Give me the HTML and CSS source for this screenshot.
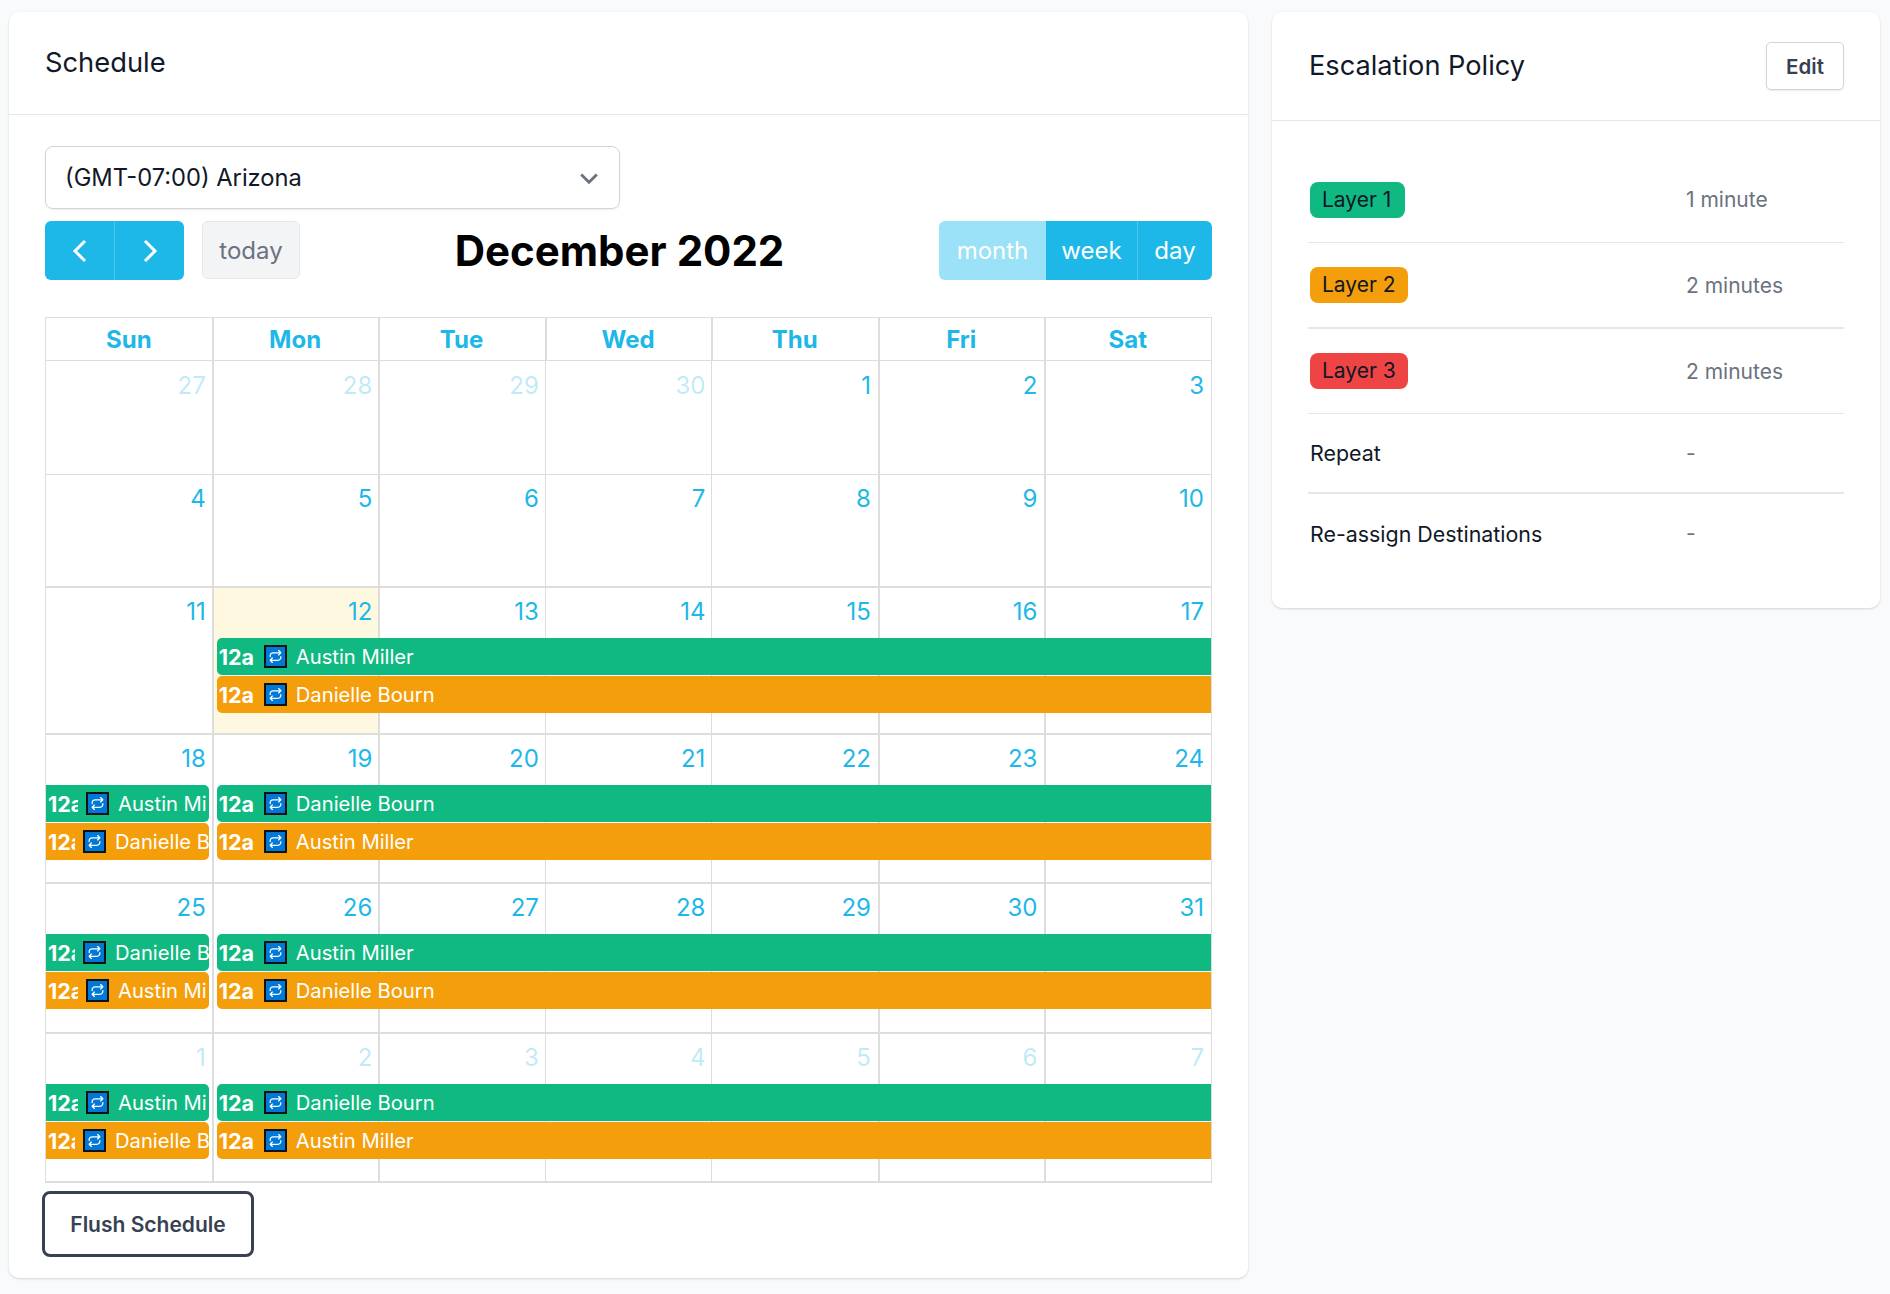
FILE: index.html
```html
<!DOCTYPE html>
<html lang="en">
<head>
<meta charset="utf-8">
<title>Schedule</title>
<link rel="stylesheet" href="styles.css">
</head>
<body>
<svg class="defs" width="0" height="0" aria-hidden="true"><symbol id="rp" viewBox="0 0 24 24"><path d="M17 2.500l3.500 3.500L17 9.500M3.500 12v-1.500A4.500 4.500 0 0 1 8 6h12M7 21.500L3.500 18 7 14.500M20.500 12v1.500A4.500 4.500 0 0 1 16 18H4" fill="none" stroke="#fff" stroke-width="2" stroke-linecap="round" stroke-linejoin="round"/></symbol></svg>
<main class="page">
  <section class="card schedule">
    <header class="schedule-head"><h2 class="title">Schedule</h2></header>
    <div class="schedule-body">
      <div class="select"><span>(GMT-07:00) Arizona</span><svg class="select-chev" viewBox="0 0 20 20"><path d="M3.500 7l6.500 6.500L16.500 7" fill="none" stroke="#6b7280" stroke-width="2.400"/></svg></div>
      <div class="toolbar">
        <div class="toolbar-left">
          <div class="btn-group">
            <button class="btn nav"><svg viewBox="0 0 20 28"><path d="M15 4L5 14l10 10" fill="none" stroke="#fff" stroke-width="3"/></svg></button>
            <button class="btn nav"><svg viewBox="0 0 20 28"><path d="M5 4l10 10L5 24" fill="none" stroke="#fff" stroke-width="3"/></svg></button>
          </div>
          <button class="today">today</button>
        </div>
        <h1 class="month-title">December 2022</h1>
        <div class="btn-group">
          <button class="btn view view-month active">month</button>
          <button class="btn view view-week">week</button>
          <button class="btn view view-day">day</button>
        </div>
      </div>
      <div class="cal">
        <div class="dow"><div>Sun</div><div>Mon</div><div>Tue</div><div>Wed</div><div>Thu</div><div>Fri</div><div>Sat</div></div>

        <div class="week w1">
          <div class="day off">27</div><div class="day off">28</div><div class="day off">29</div><div class="day off">30</div><div class="day">1</div><div class="day">2</div><div class="day">3</div>
        </div>
        <div class="week w2">
          <div class="day">4</div><div class="day">5</div><div class="day">6</div><div class="day">7</div><div class="day">8</div><div class="day">9</div><div class="day">10</div>
        </div>
        <div class="week w3">
          <div class="day">11</div><div class="day now">12</div><div class="day">13</div><div class="day">14</div><div class="day">15</div><div class="day">16</div><div class="day">17</div>
          <div class="ev green rest r1"><span class="t">12a</span><svg class="ic"><use href="#rp"/></svg><span class="n">Austin Miller</span></div>
          <div class="ev amber rest r2"><span class="t">12a</span><svg class="ic"><use href="#rp"/></svg><span class="n">Danielle Bourn</span></div>
        </div>
        <div class="week w4">
          <div class="day">18</div><div class="day">19</div><div class="day">20</div><div class="day">21</div><div class="day">22</div><div class="day">23</div><div class="day">24</div>
          <div class="ev green sun r1"><span class="t ta">12a</span><svg class="ic"><use href="#rp"/></svg><span class="n">Austin Miller</span></div>
          <div class="ev amber sun r2"><span class="t td">12a</span><svg class="ic"><use href="#rp"/></svg><span class="n">Danielle Bourn</span></div>
          <div class="ev green rest r1"><span class="t">12a</span><svg class="ic"><use href="#rp"/></svg><span class="n">Danielle Bourn</span></div>
          <div class="ev amber rest r2"><span class="t">12a</span><svg class="ic"><use href="#rp"/></svg><span class="n">Austin Miller</span></div>
        </div>
        <div class="week w5">
          <div class="day">25</div><div class="day">26</div><div class="day">27</div><div class="day">28</div><div class="day">29</div><div class="day">30</div><div class="day">31</div>
          <div class="ev green sun r1"><span class="t td">12a</span><svg class="ic"><use href="#rp"/></svg><span class="n">Danielle Bourn</span></div>
          <div class="ev amber sun r2"><span class="t ta">12a</span><svg class="ic"><use href="#rp"/></svg><span class="n">Austin Miller</span></div>
          <div class="ev green rest r1"><span class="t">12a</span><svg class="ic"><use href="#rp"/></svg><span class="n">Austin Miller</span></div>
          <div class="ev amber rest r2"><span class="t">12a</span><svg class="ic"><use href="#rp"/></svg><span class="n">Danielle Bourn</span></div>
        </div>
        <div class="week w6">
          <div class="day off">1</div><div class="day off">2</div><div class="day off">3</div><div class="day off">4</div><div class="day off">5</div><div class="day off">6</div><div class="day off">7</div>
          <div class="ev green sun r1"><span class="t ta">12a</span><svg class="ic"><use href="#rp"/></svg><span class="n">Austin Miller</span></div>
          <div class="ev amber sun r2"><span class="t td">12a</span><svg class="ic"><use href="#rp"/></svg><span class="n">Danielle Bourn</span></div>
          <div class="ev green rest r1"><span class="t">12a</span><svg class="ic"><use href="#rp"/></svg><span class="n">Danielle Bourn</span></div>
          <div class="ev amber rest r2"><span class="t">12a</span><svg class="ic"><use href="#rp"/></svg><span class="n">Austin Miller</span></div>
        </div>
      </div>
      <button class="flush">Flush Schedule</button>
    </div>
  </section>

  <aside class="card policy">
    <header class="policy-head">
      <h2 class="policy-title">Escalation Policy</h2>
      <button class="edit">Edit</button>
    </header>
    <div class="policy-body">
      <div class="prow"><span class="badge b-green">Layer 1</span><span class="pval">1 minute</span></div>
      <div class="prow"><span class="badge b-amber">Layer 2</span><span class="pval">2 minutes</span></div>
      <div class="prow"><span class="badge b-red">Layer 3</span><span class="pval">2 minutes</span></div>
      <div class="prow"><span class="plabel">Repeat</span><span class="pval">-</span></div>
      <div class="prow"><span class="plabel">Re-assign Destinations</span><span class="pval">-</span></div>
    </div>
  </aside>
</main>
</body>
</html>
```

FILE: styles.css
```css
* { box-sizing: border-box; }
html, body { margin: 0; height: 100%; }
body { background: #f9fafb; font-family: Inter, "Liberation Sans", sans-serif; color: #111827; }
button { font-family: inherit; margin: 0; }
.defs { position: absolute; }

.page { display: flex; align-items: flex-start; gap: 24px; padding: 12px 10px 16px 9px; }
.card { background: #fff; border-radius: 10px; box-shadow: 0 1px 3px rgba(0,0,0,.1), 0 1px 2px rgba(0,0,0,.06); }

.schedule { width: 1239px; height: 1266px; flex: none; }
.schedule-head { height: 103px; border-bottom: 1px solid #e5e7eb; padding: 35px 36px 0; }
.title { margin: 0; font-size: 27.300px; line-height: 32px; font-weight: 400; }
.schedule-body { padding: 31px 36px 0; }

.select { width: 575px; height: 63px; border: 1px solid #d1d5db; border-radius: 8px; display: flex; align-items: center; justify-content: space-between; padding: 0 18px 0 19px; font-size: 23.700px; box-shadow: 0 1px 2px rgba(0,0,0,.08); }
.select-chev { width: 24px; height: 24px; }

.toolbar { display: flex; justify-content: space-between; align-items: center; margin-top: 12px; height: 59px; }
.toolbar-left { display: flex; gap: 18px; align-items: flex-start; }
.btn-group { display: flex; border-radius: 6px; overflow: hidden; height: 59px; }
.btn { background: #1db8e8; border: 0; color: #fff; font-size: 24px; padding: 0; height: 59px; }
.btn + .btn { border-left: 1px solid #4cc7ed; }
.nav { width: 69px; display: flex; align-items: center; justify-content: center; }
.nav + .nav { width: 70px; }
.nav svg { width: 20px; height: 28px; }
.today { width: 98px; height: 58px; background: #f3f4f6; border: 1px solid #e5e7eb; border-radius: 6px; color: #6b7280; font-size: 24px; padding: 0; }
.month-title { margin: 0; font-size: 42px; line-height: 50px; font-weight: 700; color: #000; }
.view-month { width: 107px; }
.view-week { width: 91px; border-left: 0 !important; }
.view-day { width: 75px; }
.active { background: #9be1f7; }

.cal { margin-top: 37px; border: 1px solid #ddd; border-bottom-width: 2px; width: 1167px; }
.dow { display: grid; grid-template-columns: 165.800px repeat(6, 1fr); height: 43px; border-bottom: 1px solid #ddd; }
.dow div { text-align: center; font-size: 24px; font-weight: 700; color: #1db8e8; line-height: 43px; border-left: 2px solid #ddd; padding-right: 2px; }
.dow div:first-child { border-left: 0; padding-right: 0; }

.week { display: grid; grid-template-columns: 165.800px repeat(6, 1fr); border-top: 1px solid #ddd; }
.dow + .week { border-top: 0; }
.w1 { height: 113px; grid-template-rows: 1fr; }
.w2 { height: 112px; grid-template-rows: 1fr; }
.w3 { height: 147px; grid-template-rows: 50px 37px 38px 1fr; border-top-width: 2px; }
.w4 { height: 149px; grid-template-rows: 50px 37px 38px 1fr; border-top-width: 2px; }
.w5 { height: 150px; grid-template-rows: 50px 37px 38px 1fr; border-top-width: 2px; }
.w6 { height: 149px; grid-template-rows: 50px 37px 38px 1fr; border-top-width: 2px; }

.day { grid-row: 1 / -1; border-left: 2px solid #ddd; text-align: right; padding: 9px 6px 0 0; font-size: 24px; line-height: 29px; color: #1db8e8; }
.w1 .day { padding-top: 10px; }
.day:nth-child(1) { grid-column: 1; border-left: 0; }
.day:nth-child(2) { grid-column: 2; }
.day:nth-child(3) { grid-column: 3; }
.day:nth-child(4) { grid-column: 4; border-left-width: 1px; }
.day:nth-child(5) { grid-column: 5; border-left-width: 1px; padding-right: 7px; }
.day:nth-child(6) { grid-column: 6; padding-right: 7px; }
.day:nth-child(7) { grid-column: 7; padding-right: 7px; }
.off { color: rgba(29,184,232,.3); }
.now { background: #fef8e0; }

.ev { display: flex; align-items: center; color: #fff; font-size: 20.200px; line-height: 24px; min-width: 0; overflow: hidden; white-space: nowrap; position: relative; }
.r1 { grid-row: 2; }
.r2 { grid-row: 3; margin-top: 1px; }
.green { background: #10b981; }
.amber { background: #f59e0b; }
.rest { grid-column: 2 / 8; margin-left: 5px; border-radius: 5px 0 0 5px; padding-left: 2px; }
.sun { grid-column: 1; margin-right: 3px; border-radius: 0 5px 5px 0; padding-left: 2px; padding-right: 3px; }
.t { font-weight: 700; font-size: 21.500px; width: 36px; flex: none; overflow: hidden; margin-right: 9px; }
.ta { width: 30px; margin-right: 8px; }
.td { width: 27px; margin-right: 8px; }
.ic { width: 23px; height: 23px; flex: none; background: #0078d7; border: 2px solid #111; padding: 2px; margin-right: 9px; }
.n { flex: none; }
.ta ~ .n { max-width: 89px; overflow: hidden; }

.flush { display: block; margin: 8px 0 0 -3px; width: 212px; height: 66px; background: #fff; border: 3px solid #374151; border-radius: 8px; font-size: 21px; font-weight: 600; color: #374151; padding: 0; }

.policy { width: 608px; height: 596px; flex: none; }
.policy-head { height: 109px; border-bottom: 1px solid #e5e7eb; display: flex; align-items: center; justify-content: space-between; padding: 0 36px 0 37px; }
.policy-title { margin: 0; font-size: 27.200px; line-height: 32px; font-weight: 400; }
.edit { width: 78px; height: 48px; background: #fff; border: 1px solid #d1d5db; border-radius: 5px; font-size: 20.500px; font-weight: 600; color: #374151; padding: 0; box-shadow: 0 1px 2px rgba(0,0,0,.08); }
.policy-body { padding: 36px 36px 0 36px; }
.prow { display: flex; align-items: center; height: 86px; border-bottom: 1px solid #e5e7eb; padding-left: 2px; }
.prow:nth-child(2) { height: 86px; border-bottom-width: 2px; }
.prow:nth-child(3) { height: 85px; }
.prow:nth-child(4) { height: 80px; border-bottom-width: 2px; }
.prow:nth-child(5) { height: 79px; border-bottom: 0; }
.badge { font-size: 21px; line-height: 36px; height: 36px; padding: 0 12px; border-radius: 8px; color: #111827; }
.b-green { background: #10b981; padding-right: 14px; }
.b-amber { background: #f59e0b; }
.b-red { background: #ef4444; }
.pval { position: absolute; left: 1686px; font-size: 21px; color: #6b7280; }
.plabel { font-size: 21.400px; font-weight: 400; color: #111827; }
```
